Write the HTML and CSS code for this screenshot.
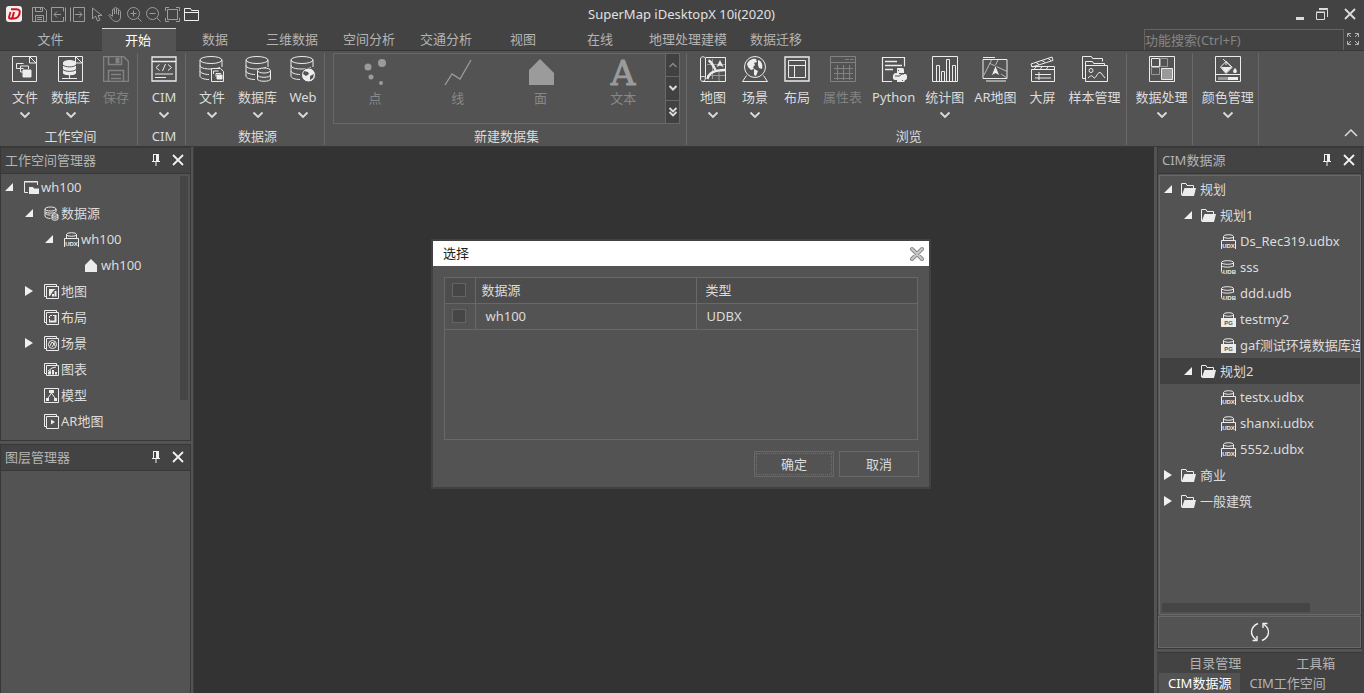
FILE: index.html
```html
<!DOCTYPE html>
<html lang="zh-CN">
<head>
<meta charset="utf-8">
<title>SuperMap iDesktopX 10i(2020)</title>
<link rel="stylesheet" href="styles.css">
</head>
<body>
<svg class="defs" aria-hidden="true">
  <symbol id="chev" viewBox="0 0 12 10"><path d="M1.500 2.500l4.500 4.500 4.500-4.500" stroke-width="1.800"/></symbol>
  <symbol id="close" viewBox="0 0 14 14"><path d="M2 2l10 10M12 2L2 12" stroke-width="1.800"/></symbol>
  <symbol id="pin" viewBox="0 0 10 14"><path d="M2 1.500h6M2.500 1v7M7.500 1v7M1 8.500h8M5 8v5"/><path d="M5 1h3v7H5z" fill="currentColor" stroke="none"/></symbol>
  <symbol id="open" viewBox="0 0 10 10"><path d="M9 1v8H1z" fill="currentColor" stroke="none"/></symbol>
  <symbol id="shut" viewBox="0 0 10 10"><path d="M1 0v10l8-5z" fill="currentColor" stroke="none"/></symbol>
  <symbol id="folder" viewBox="0 0 15 15"><path d="M.5 13V1.500h4.500l1 2h6.500V6"/><path d="M3.500 6H15l-2 8H.5z" fill="currentColor" stroke="none"/></symbol>
  <symbol id="cyl" viewBox="0 0 15 15"><ellipse cx="6.500" cy="3" rx="5.500" ry="2"/><path d="M1 3v7M12 3v3M1.500 6c2 1.500 8 1.500 10 0"/></symbol>
  <symbol id="udx" viewBox="0 0 15 15"><ellipse cx="7.500" cy="2.500" rx="5" ry="1.800"/><path d="M2.500 2.500V6M12.500 2.500V6M.5 15V6.500h14V15"/></symbol>
  <symbol id="udb" viewBox="0 0 15 15"><ellipse cx="6.500" cy="2.500" rx="6" ry="1.800"/><path d="M.5 2.500v9c0 1 .5 1.500 2 1.500M12.500 2.500v4M.5 6c2 1.500 9 1.500 12 0"/></symbol>
  <symbol id="pg" viewBox="0 0 15 15"><ellipse cx="7.500" cy="2.500" rx="5" ry="1.800"/><path d="M2.500 2.500V6M12.500 2.500V6"/><path d="M0 6h15v9H0z" fill="currentColor" stroke="none"/></symbol>
  <symbol id="stack" viewBox="0 0 15 15"><path d="M2.500 12.500h-2V.5h12v2M2.500 2.500h12v12h-12z"/></symbol>
  <symbol id="db" viewBox="0 0 26 26"><ellipse cx="12" cy="4" rx="11" ry="3.500"/><path d="M1 4v16c0 2 4 3.500 9 3.500M23 4v7M1 9.500c0 4 14 4.500 20 2M1 15c0 2 5 3.500 9 3.500"/></symbol>
  <symbol id="doc" viewBox="0 0 26 26"><path d="M.5.500h17l7 7v18H.5zM17.500.500v6.500h7M24.500.500v7M17.500.500h7"/></symbol>
</svg>

<header class="titlebar">
  <nav class="quick" aria-label="快速访问">
    <svg class="logo" viewBox="0 0 16 16"><rect width="16" height="16" rx="3" fill="#f4eeee" stroke="none"/><path d="M5 3.200h5.500c3 0 3.800 1.800 3 4.600C12.700 11 11 12.500 8 12.500H6.200L8 6" stroke="#d3121c" stroke-width="2"/><path d="M4.500 6L3 11c-.3 1.200.4 1.500 1.500 1.500h2" stroke="#d3121c" stroke-width="1.800"/></svg>
    <button aria-label="保存"><svg viewBox="0 0 15 15"><path d="M.5.500h11l3 3v11H.5zM3.500.500v4h7v-4M8.500 1v2M3.500 14V8.500h8V14M5 10.500h5M5 12.500h5"/></svg></button>
    <button aria-label="导入"><svg viewBox="0 0 15 15"><path d="M12.500.500H.5v14h12M14.500.500v14M12.500 .5v4M12.500 10v4.500M10 7.500H3M6 4.500l-3 3 3 3"/></svg></button>
    <button aria-label="导出"><svg viewBox="0 0 15 15"><path d="M.5.500v14M3.500.500v14M3.500.500h11v14h-11M5 7.500h7M9 4.500l3 3-3 3"/></svg></button>
    <button aria-label="选择"><svg viewBox="0 0 15 15"><path d="M3.500 1v11l3-3 2 5 2.500-1-2-4.500h4z"/></svg></button>
    <button aria-label="平移"><svg viewBox="0 0 15 15"><path d="M4.500 9V3c0-1.500 2-1.500 2 0v4V1.500c0-1.500 2-1.500 2 0V7 2.500c0-1.500 2-1.500 2 0V8 4.500c0-1.500 2-1.500 2 0V10c0 3-2 4.500-4 4.500-3 0-4-1.500-5-3L1 8.500c0-1 1-1.500 2-.5l1.500 1.500"/></svg></button>
    <button aria-label="放大"><svg viewBox="0 0 15 15"><circle cx="6.500" cy="6.500" r="6"/><path d="M11 11l3.500 3.500M3.500 6.500h6M6.500 3.500v6"/></svg></button>
    <button aria-label="缩小"><svg viewBox="0 0 15 15"><circle cx="6.500" cy="6.500" r="6"/><path d="M11 11l3.500 3.500M3.500 6.500h6"/></svg></button>
    <button aria-label="全幅"><svg viewBox="0 0 15 15"><path d="M2.500 2.500h10v10h-10zM.5 4V.5H4M11 .5h3.500V4M14.500 11v3.500H11M4 14.500H.5V11"/></svg></button>
    <button aria-label="打开" class="bright"><svg viewBox="0 0 15 15"><path d="M.5 13.500v-12h6l1 2h7v10zM.5 5.500h14"/></svg></button>
  </nav>
  <h1>SuperMap iDesktopX 10i(2020)</h1>
  <div class="winbtns">
    <button aria-label="最小化"><svg viewBox="0 0 14 14"><path d="M3 11.500h8" stroke-width="3"/></svg></button>
    <button aria-label="还原"><svg viewBox="0 0 14 14"><path d="M1.500 5.500h8v7h-8zM1 5h9" /><path d="M4 2.500h8.500V10M4 1.500h9"/></svg></button>
    <button aria-label="关闭"><svg><use href="#close"/></svg></button>
  </div>
</header>

<div class="tabs">
  <div class="tablist" role="tablist">
    <button role="tab" class="file">文件</button>
    <button role="tab" class="on" aria-selected="true">开始</button>
    <button role="tab">数据</button>
    <button role="tab">三维数据</button>
    <button role="tab">空间分析</button>
    <button role="tab">交通分析</button>
    <button role="tab">视图</button>
    <button role="tab">在线</button>
    <button role="tab">地理处理建模</button>
    <button role="tab">数据迁移</button>
  </div>
  <input class="search" type="text" placeholder="功能搜索(Ctrl+F)" aria-label="功能搜索">
  <button class="full" aria-label="全屏"><svg viewBox="0 0 14 14"><path d="M1.500 5V1.500H5M2 2l3 3M9 1.500h3.500V5M12 2L9 5M1.500 9v3.500H5M2 12l3-3M12.500 9v3.500H9M12 12L9 9"/></svg></button>
</div>

<section class="ribbon">
  <div class="group first">
    <div class="items">
      <button class="tool"><svg class="ic" viewBox="0 0 26 26"><use href="#doc"/><path d="M11.500 12.500H4.500v-5h7M14.500 16H8.500v-6h8v3"/><path d="M11 14h8v7h-8z" fill="currentColor"/></svg>文件<svg class="ch"><use href="#chev"/></svg></button>
      <button class="tool"><svg class="ic" viewBox="0 0 26 26"><use href="#doc"/><path d="M5 7c0-4 13-4 13 0v10c0 3-13 3-13 0z" fill="currentColor" stroke="none"/><path d="M5 9c2 2.500 11 2.500 13 0M5 13.500c2 2.500 11 2.500 13 0" stroke="#535353"/><path d="M11.500 19v3M4 22.500h15"/></svg>数据库<svg class="ch"><use href="#chev"/></svg></button>
      <button class="tool" disabled><svg class="ic" viewBox="0 0 26 26"><path d="M.5.500h20l5 5v20H.5zM5.500.500v8h13v-8" stroke-width="1.500"/><path d="M13 2h3v5h-3z" fill="currentColor"/><path d="M5.500 25V14.500h15V25M8 18.500h10M8 22.500h10" stroke-width="1.500"/></svg>保存</button>
    </div>
    <div class="cap">工作空间</div>
  </div>
  <div class="group">
    <div class="items">
      <button class="tool"><svg class="ic" viewBox="0 0 26 26"><path d="M1 1h24v24H1zM1 5.500h24" stroke-width="1.300"/><path d="M8.500 8.500L5 11.500l3.500 3M17 8.500l3.500 3-3.500 3M14.500 8l-3 7M4 18h18M4 21.500h11"/></svg>CIM<svg class="ch"><use href="#chev"/></svg></button>
    </div>
    <div class="cap">CIM</div>
  </div>
  <div class="group">
    <div class="items">
      <button class="tool"><svg class="ic" viewBox="0 0 26 26"><use href="#db"/><path d="M12.500 12.500h9l3 3v10h-12z" fill="#535353"/><path d="M14.500 18v-3h5M17 20.500v-3h5"/><path d="M18 19h5v4h-5z" fill="currentColor"/></svg>文件<svg class="ch"><use href="#chev"/></svg></button>
      <button class="tool"><svg class="ic" viewBox="0 0 26 26"><use href="#db"/><path d="M12.500 14.500v8.500c0 3 13 3 13 0v-8.500" fill="#535353"/><ellipse cx="19" cy="14.500" rx="6.500" ry="2.500" fill="#535353"/><path d="M12.500 19c0 3 13 3 13 0"/></svg>数据库<svg class="ch"><use href="#chev"/></svg></button>
      <button class="tool"><svg class="ic" viewBox="0 0 26 26"><use href="#db"/><circle cx="18.500" cy="19" r="7" fill="currentColor" stroke="#535353"/><path d="M14 15l4 1 1 2-3 2-3-2zM20 20l4-2-1 4-3 2z" fill="#535353" stroke="none"/></svg>Web<svg class="ch"><use href="#chev"/></svg></button>
    </div>
    <div class="cap">数据源</div>
  </div>
  <div class="group wide">
    <div class="gallery">
      <button disabled><svg viewBox="0 0 30 30"><g fill="currentColor" stroke="none"><circle cx="8" cy="11" r="3.500"/><circle cx="22" cy="7" r="4"/><circle cx="11" cy="21" r="2.500"/><circle cx="21" cy="27" r="2"/></g></svg>点</button>
      <button disabled><svg viewBox="0 0 30 30"><path d="M2 29l7-11 8 5L28 4" stroke-width="1.300"/></svg>线</button>
      <button disabled><svg viewBox="0 0 30 30"><path d="M3 29V14L14 3l14 14v12z" fill="currentColor" stroke="none"/></svg>面</button>
      <button disabled><svg viewBox="0 0 30 30"><text x="15" y="29" class="bigA">A</text></svg>文本</button>
      <div class="spin">
        <button disabled aria-label="上一行"><svg viewBox="0 0 12 10"><path d="M2.500 7L6 3.500 9.500 7" stroke-width="1.500"/></svg></button>
        <button aria-label="下一行"><svg viewBox="0 0 12 10"><path d="M2.500 3L6 6.500 9.500 3" stroke-width="2"/></svg></button>
        <button aria-label="展开"><svg viewBox="0 0 12 10"><path d="M2.500 1L6 4.500 9.500 1M2.500 5L6 8.500 9.500 5" stroke-width="1.800"/></svg></button>
      </div>
    </div>
    <div class="cap">新建数据集</div>
  </div>
  <div class="group">
    <div class="items">
      <button class="tool"><svg class="ic" viewBox="0 0 26 26"><path d="M5.500 1.500h20v24H3"/><path d="M5.500 3v18.500c0 5-5 5-5 1.500V3c0-3 5-3 5 0zM.5 22c0-2 5-2 5 0"/><path d="M12.500 3v20M19 16v9M7 8.500h18M7 19.500h18" stroke="#999"/><path d="M8.500 4.500c3 1 4 4 7 9.500M7.500 23c1-6 6-9 17.500-9" stroke-width="2.400"/><path d="M20 4l3.500 7-3.500-1.500-3.500 1.500z" fill="currentColor" stroke="none"/></svg>地图<svg class="ch"><use href="#chev"/></svg></button>
      <button class="tool"><svg class="ic" viewBox="0 0 26 26"><circle cx="13" cy="11" r="10.500"/><path d="M5 8c2-5 7-6 9-5l1 3-3 1 1 2-2 2 1 2-3 1-3-3zM16 4c4 1 5 5 4 9l-3-1-1-3zM12 13l4 2-2 5-2-1z" fill="currentColor" stroke="none"/><path d="M4.500 19.500L.5 25.500h25l-4-6"/></svg>场景<svg class="ch"><use href="#chev"/></svg></button>
      <button class="tool"><svg class="ic" viewBox="0 0 26 26"><path d="M1 1h24v24H1z" stroke-width="1.400"/><path d="M4.500 4.500h17v17h-17zM4.500 9.500h17M10.500 9.500v12"/></svg>布局</button>
      <button class="tool" disabled><svg class="ic" viewBox="0 0 26 26"><path d="M.5.500h25v25H.5zM.5 6.500h25M15 3.500h4M20 3.500h4M4 12.500h19M4 17.500h19M4 22.500h19M7.500 9v15M13.500 9v15M19.500 9v15"/></svg>属性表</button>
      <button class="tool"><svg class="ic" viewBox="0 0 26 26"><path d="M11 25.500H1.500V1.500h22v9" stroke-width="1.200"/><path d="M4 5.500h12M4 9.500h17M4 13.500h8" stroke-width="1.500"/><path d="M16 12h5c2 0 2 1 2 3v2h-5v1h6c3 0 3 6 0 6l-1 3h-5c-2 0-2-1-2-3h-2c-3 0-3-7 1-7h1z" fill="currentColor" stroke="none"/><path d="M14 20h4c1 0 2-.5 2-2h3M17 14.500h1M21 24.500h1" stroke="#535353"/></svg>Python</button>
      <button class="tool"><svg class="ic" viewBox="0 0 26 26"><path d="M.5.500h25v25H.5z"/><path d="M4.500 25V9.500h3V25M9.500 25v-9.500h3V25M14.500 25V3.500h3V25M20.500 25V9.500h3V25"/></svg>统计图<svg class="ch"><use href="#chev"/></svg></button>
      <button class="tool"><svg class="ic" viewBox="0 0 26 26"><path d="M1 3.500h24v19H1zM1 1.500h12M4 25h20"/><path d="M9.500 4L2 19M8 7.500l17 8M16 4l-3 6M19 18l6 4" stroke="#bbb"/><path d="M13.500 9l4.500 11-4.500-2.500L9 20z" fill="currentColor" stroke="#535353"/></svg>AR地图</button>
      <button class="tool"><svg class="ic" viewBox="0 0 26 26"><path d="M1.500 13.500h23v12h-23zM1.500 10.500h23v3h-23M1 8L22 1l1 3.500L2 11zM6 6.500l3 2M12 4.500l3 2M18 2.500l3 2M6 11l-2 2.500M12 11l-2 2.500M18 11l-2 2.500M5 18.500h16M5 22h16M9 16v8"/></svg>大屏</button>
      <button class="tool"><svg class="ic" viewBox="0 0 26 26"><path d="M3 22.500H.5v-22h9l1 2h10v3M3.500 25V5.500h7l1 2h11v2M3.500 9.500h22v16h-22z"/><circle cx="9" cy="14.500" r="2"/><path d="M6 22c3-3 4-3 6 0 2 1 4-8 7-5l4 5"/></svg>样本管理</button>
    </div>
    <div class="cap">浏览</div>
  </div>
  <div class="group slim">
    <div class="items">
      <button class="tool"><svg class="ic" viewBox="0 0 26 26"><path d="M.5.500h25v25H.5z"/><path d="M11.500 2.500h7v8h-7zM2.500 11.500h8v7h-8z" stroke="#999"/><path d="M2.500 2.500h8v8h-8z"/><path d="M12.500 12.500h11v11h-11z" fill="#9a9a9a"/></svg>数据处理<svg class="ch"><use href="#chev"/></svg></button>
    </div>
  </div>
  <div class="group slim">
    <div class="items">
      <button class="tool"><svg class="ic" viewBox="0 0 26 26"><path d="M.5.500h25v25H.5zM.5 18.500h25"/><path d="M8 3l9 8M11 5v4"/><path d="M5.500 11L11 5.500l6 6-6 6z"/><path d="M6 11h11l-6 6zM20 12c3 3 2 5 0 5s-3-2 0-5z" fill="currentColor" stroke="none"/><path d="M3 22.500h10" stroke="#999" stroke-width="3"/><path d="M13 22.500h10" stroke-width="3"/></svg>颜色管理<svg class="ch"><use href="#chev"/></svg></button>
    </div>
  </div>
  <button class="collapse" aria-label="折叠功能区"><svg viewBox="0 0 14 10"><path d="M1 8l6-6 6 6" stroke-width="1.500"/></svg></button>
</section>

<main class="work">
  <aside class="left">
    <section class="panel upper">
      <header class="phead"><h2>工作空间管理器</h2><button aria-label="固定"><svg class="pin"><use href="#pin"/></svg></button><button aria-label="关闭"><svg class="x"><use href="#close"/></svg></button></header>
      <div class="pbody">
        <ul class="tree">
          <li class="l0"><svg class="ar"><use href="#open"/></svg><svg class="ti" viewBox="0 0 15 15"><path d="M4 12.500H.5V1.500h13V5M.5 2h13"/><path d="M5 7h4l1 1.500h5V14H5z" fill="currentColor" stroke="none"/></svg>wh100</li>
          <li class="l1"><svg class="ar"><use href="#open"/></svg><svg class="ti" viewBox="0 0 15 15"><use href="#cyl"/><path d="M1 10c0 1.500 3 2.500 5.500 2.500M1.500 7c1 2 3 2 5 2"/><ellipse cx="11" cy="9" rx="3" ry="1.200"/><path d="M8 9v4c0 1.500 6 1.500 6 0V9M8 11c1 1.500 5 1.500 6 0"/></svg>数据源</li>
          <li class="l2"><svg class="ar"><use href="#open"/></svg><svg class="ti" viewBox="0 0 15 15"><use href="#udx"/><text x="7.500" y="14" class="tiny">UDX</text></svg>wh100</li>
          <li class="l3"><span class="ar"></span><svg class="ti" viewBox="0 0 15 15"><path d="M1 14V7l6-6 6 6v7z" fill="currentColor" stroke="none"/></svg>wh100</li>
          <li class="l1"><svg class="ar"><use href="#shut"/></svg><svg class="ti" viewBox="0 0 15 15"><use href="#stack"/><path d="M5 5h7c-3 1-4 4-6 7H5z" fill="currentColor" stroke="none"/><path d="M11.500 7v5.500M9 10v2.500" stroke-width="2"/></svg>地图</li>
          <li class="l1"><span class="ar"></span><svg class="ti" viewBox="0 0 15 15"><use href="#stack"/><path d="M5.500 11V5.500H11" stroke-dasharray="2 1"/><path d="M5 11.500h6.500V5" stroke-width="2"/></svg>布局</li>
          <li class="l1"><svg class="ar"><use href="#shut"/></svg><svg class="ti" viewBox="0 0 15 15"><use href="#stack"/><circle cx="8.500" cy="8.500" r="4"/><path d="M6 10l2-4 2 2-2 3M10 6l1 4"/></svg>场景</li>
          <li class="l1"><span class="ar"></span><svg class="ti" viewBox="0 0 15 15"><path d="M2.500 11.500h-2v-10h12v2M2.500 3.500h12v10h-12z"/><path d="M4 12.500V10l3-2v4.500zM8 12.500V8h2v4.500zM11 12.500V10h2v2.500z" fill="currentColor" stroke="none"/><path d="M4 9l4-3 4-1"/></svg>图表</li>
          <li class="l1"><span class="ar"></span><svg class="ti" viewBox="0 0 15 15"><path d="M.5.500h14v14H.5z"/><path d="M5 2h5v3H5zM2 10h3v3H2zM10 10h3v3h-3z" fill="currentColor" stroke="none"/><path d="M4 10l3.500-5L11 10"/></svg>模型</li>
          <li class="l1"><span class="ar"></span><svg class="ti" viewBox="0 0 15 15"><use href="#stack"/><path d="M7 5.500v5l4-2.500z" fill="currentColor" stroke="none"/></svg>AR地图</li>
        </ul>
        <div class="vbar"></div>
      </div>
    </section>
    <section class="panel lower">
      <header class="phead"><h2>图层管理器</h2><button aria-label="固定"><svg class="pin"><use href="#pin"/></svg></button><button aria-label="关闭"><svg class="x"><use href="#close"/></svg></button></header>
    </section>
  </aside>

  <div class="canvas"></div>

  <aside class="right">
    <section class="panel cim">
      <header class="phead"><h2>CIM数据源</h2><button aria-label="固定"><svg class="pin"><use href="#pin"/></svg></button><button aria-label="关闭"><svg class="x"><use href="#close"/></svg></button></header>
      <div class="box">
        <ul class="tree wider">
          <li class="l0"><svg class="ar"><use href="#open"/></svg><svg class="ti"><use href="#folder"/></svg>规划</li>
          <li class="l1"><svg class="ar"><use href="#open"/></svg><svg class="ti"><use href="#folder"/></svg>规划1</li>
          <li class="l2"><span class="ar"></span><svg class="ti" viewBox="0 0 15 15"><use href="#udx"/><text x="7.500" y="14" class="tiny">UDX</text></svg>Ds_Rec319.udbx</li>
          <li class="l2"><span class="ar"></span><svg class="ti" viewBox="0 0 15 15"><use href="#udb"/><text x="8.500" y="14" class="tiny">UDB</text></svg>sss</li>
          <li class="l2"><span class="ar"></span><svg class="ti" viewBox="0 0 15 15"><use href="#udb"/><text x="8.500" y="14" class="tiny">UDB</text></svg>ddd.udb</li>
          <li class="l2"><span class="ar"></span><svg class="ti" viewBox="0 0 15 15"><use href="#pg"/><text x="7.500" y="13" class="tiny inv">PG</text></svg>testmy2</li>
          <li class="l2"><span class="ar"></span><svg class="ti" viewBox="0 0 15 15"><use href="#pg"/><text x="7.500" y="13" class="tiny inv">PG</text></svg>gaf测试环境数据库连接</li>
          <li class="l1 sel"><svg class="ar"><use href="#open"/></svg><svg class="ti"><use href="#folder"/></svg>规划2</li>
          <li class="l2"><span class="ar"></span><svg class="ti" viewBox="0 0 15 15"><use href="#udx"/><text x="7.500" y="14" class="tiny">UDX</text></svg>testx.udbx</li>
          <li class="l2"><span class="ar"></span><svg class="ti" viewBox="0 0 15 15"><use href="#udx"/><text x="7.500" y="14" class="tiny">UDX</text></svg>shanxi.udbx</li>
          <li class="l2"><span class="ar"></span><svg class="ti" viewBox="0 0 15 15"><use href="#udx"/><text x="7.500" y="14" class="tiny">UDX</text></svg>5552.udbx</li>
          <li class="l0"><svg class="ar"><use href="#shut"/></svg><svg class="ti"><use href="#folder"/></svg>商业</li>
          <li class="l0"><svg class="ar"><use href="#shut"/></svg><svg class="ti"><use href="#folder"/></svg>一般建筑</li>
        </ul>
        <div class="hbar"></div>
      </div>
      <button class="refresh" aria-label="刷新"><svg viewBox="0 0 20 20"><path d="M8 1.500C0 5-.5 13 6 17.500M2.500 18.500h4.500V14M12 18.500c8-3.500 8.500-11.500 2-16M17.500 1.500H13V6" stroke-width="1.400"/></svg></button>
    </section>
    <div class="dock">
      <div class="row one"><button>目录管理</button><button>工具箱</button></div>
      <div class="row two"><button class="on">CIM数据源</button><button>CIM工作空间</button></div>
    </div>
  </aside>
</main>

<div class="dialog" role="dialog" aria-labelledby="dlg">
  <header><h2 id="dlg">选择</h2><button aria-label="关闭"><svg viewBox="0 0 16 16"><path d="M3 3l10 10M13 3L3 13" stroke="#8a8a8a" stroke-width="4" stroke-linecap="round"/><path d="M3 3l10 10M13 3L3 13" stroke="#c8c8c8" stroke-width="2" stroke-linecap="round"/></svg></button></header>
  <div class="dbody">
    <div class="grid">
      <table>
        <thead><tr><th class="ck"><input type="checkbox" aria-label="全选"></th><th class="c2">数据源</th><th>类型</th></tr></thead>
        <tbody><tr><td class="ck"><input type="checkbox" aria-label="选择 wh100"></td><td>wh100</td><td>UDBX</td></tr></tbody>
      </table>
    </div>
    <div class="acts"><button class="focus">确定</button><button>取消</button></div>
  </div>
</div>
</body>
</html>
```
FILE: styles.css
```css
* { box-sizing: border-box; }
body {
  margin: 0;
  height: 100vh;
  display: flex;
  flex-direction: column;
  overflow: hidden;
  background: #434343;
  color: #dcdcdc;
  font: 13px/20px "Noto Sans", "Noto Sans CJK SC", sans-serif;
}
button {
  font: inherit;
  color: inherit;
  background: none;
  border: 0;
  padding: 0;
  white-space: nowrap;
}
h1, h2 { margin: 0; font: inherit; }
ul { margin: 0; padding: 0; list-style: none; }
svg { display: block; fill: none; stroke: currentColor; flex: none; }
.defs { position: absolute; width: 0; height: 0; }
.tiny { font: bold 6px/6px "Liberation Sans", sans-serif; fill: currentColor; stroke: none; text-anchor: middle; }
.inv { fill: #535353; }

.titlebar { display: flex; align-items: center; height: 28px; padding: 0 7px 0 6px; }
.logo { width: 16px; height: 16px; margin-right: 6px; }
.quick { display: flex; gap: 4px; flex: 1; color: #9c9c9c; }
.quick button svg { width: 15px; height: 15px; }
.quick .bright { color: #f0f0f0; }
.titlebar h1 { color: #e0e0e0; }
.winbtns { flex: 1; display: flex; justify-content: flex-end; gap: 8px; }
.winbtns button:last-child { margin-left: 6px; }
.winbtns svg { width: 14px; height: 14px; }

.tabs { display: flex; height: 23px; border-bottom: 1px solid #383838; color: #b4b4b4; }
.tablist { display: flex; gap: 3px; flex: 1; }
.tablist button { min-width: 74px; padding: 0 10px 0 8px; }
.tablist .file { min-width: 99px; padding: 0 8px 0 10px; }
.tablist .on { background: #535353; border-top: 1px solid #d8d8d8; color: #fff; margin-bottom: -1px; }
.search {
  width: 200px;
  margin-top: 1px;
  border: 1px solid #646464;
  border-bottom: 0;
  background: transparent;
  color: #ddd;
  font: inherit;
  padding: 0;
}
.search::placeholder { color: #858585; opacity: 1; }
.full { padding: 0 4px 0 2px; }
.full svg { width: 14px; height: 14px; }

.ribbon { display: flex; height: 96px; background: #535353; border-bottom: 1px solid #383838; flex: none; }
.group {
  display: flex;
  flex-direction: column;
  padding: 0 5px 0 10px;
  border-right: 1px solid #686868;
  margin: 2px 0 1px;
}
.first { padding-left: 9px; }
.wide { padding: 0 6px 0 8px; }
.slim { padding: 0 4px 0 9px; }
.items { display: flex; gap: 10px; height: 74px; }
.tool { display: flex; flex-direction: column; align-items: center; min-width: 32px; padding-top: 3px; }
.tool .ic { width: 26px; height: 26px; margin-bottom: 5px; color: #ececec; }
.tool .ch { width: 12px; height: 10px; margin-top: 3px; color: #dcdcdc; }
.tool:disabled, .tool:disabled .ic { color: #828282; }
.cap { text-align: center; line-height: 18px; }
.gallery { display: grid; grid-template-columns: repeat(4, 82px) 14px; width: 347px; justify-content: space-between; height: 71px; border: 1px solid #686868; margin-bottom: 3px; flex: none; }
.gallery > button { display: flex; flex-direction: column; align-items: center; padding-top: 2px; color: #888; }
.gallery > button svg { width: 30px; height: 30px; margin-bottom: 2px; color: #9b9b9b; }
.bigA { font: 34px/34px "DejaVu Serif", serif; fill: currentColor; stroke: currentColor; text-anchor: middle; }
.spin { display: grid; grid-template-rows: 1fr 1fr 1fr; gap: 1px; background: #686868; border-left: 1px solid #686868; }
.spin button { background: #414141; display: flex; align-items: center; justify-content: center; }
.spin svg { width: 12px; height: 10px; }
.spin button:disabled { color: #888; }
.collapse { margin-left: auto; padding: 0 6px 8px; display: flex; align-items: flex-end; }
.collapse svg { width: 14px; height: 10px; }

.work { display: flex; flex: 1; min-height: 0; background: #535353; }
.left { width: 194px; flex: none; display: flex; flex-direction: column; padding-right: 2px; border-right: 1px solid #3d3d3d; gap: 3px; }
.panel { border: 1px solid #383838; }
.phead { display: flex; align-items: center; height: 26px; background: #434343; border-bottom: 1px solid #383838; padding: 0 5px 2px 4px; color: #b4b4b4; }
.phead h2 { flex: 1; }
.phead button { color: #f0f0f0; margin-left: 10px; }
.phead .pin { width: 10px; height: 14px; }
.phead .x { width: 14px; height: 14px; }
.pbody { display: flex; padding: 0 2px 6px 0; }
.tree { flex: 1; min-width: 0; overflow: hidden; }
.tree li { display: flex; align-items: center; height: 26px; white-space: nowrap; }
.ar { width: 10px; height: 10px; margin: 0 10px 0 3px; color: #f0f0f0; flex: none; }
.ti { width: 15px; height: 15px; margin-right: 2px; color: #ececec; }
.wider .ar { margin-right: 8px; }
.wider .ti { margin-right: 4px; }
.l1 { padding-left: 20px; }
.l2 { padding-left: 40px; }
.l3 { padding-left: 60px; }
.vbar { width: 8px; height: 224px; margin-top: 2px; background: #454545; }
.lower { flex: 1; border-bottom: 0; }
.canvas { flex: 1; background: #333; }
.right { width: 210px; flex: none; display: flex; flex-direction: column; padding-left: 3px; border-right: 2px solid #434343; }
.cim { flex: 1; display: flex; flex-direction: column; min-height: 0; }
.box { flex: 1; display: flex; flex-direction: column; border: 1px solid #686868; margin: 1px 0 1px 1px; min-height: 0; }
.sel { background: #414141; }
.hbar { width: 148px; height: 9px; margin: 0 2px 2px; background: #454545; }
.refresh { height: 32px; border: 1px solid #686868; display: flex; align-items: center; justify-content: center; }
.refresh svg { width: 20px; height: 20px; color: #f0f0f0; }
.dock { background: #434343; border-top: 1px solid #383838; margin-top: 3px; color: #b4b4b4; }
.row { display: flex; height: 20px; }
.row button { line-height: 20px; }
.one button { flex: 1; text-align: center; padding: 0 0 2px 8px; }
.one button:first-child { padding-left: 12px; }
.two { padding-left: 2px; }
.two button { padding: 0 9px; }
.two .on { background: #535353; color: #fff; }

.dialog { position: absolute; left: 50%; top: 239px; width: 500px; margin-left: -251px; border: 2px solid #414141; background: #535353; }
.dialog header { display: flex; align-items: center; justify-content: space-between; height: 25px; background: #fff; color: #222; padding: 0 4px 0 10px; }
.dialog header svg { width: 16px; height: 16px; }
.dialog h2 { padding-bottom: 2px; }
.dbody { padding: 11px 10px 10px 11px; }
.grid { height: 163px; border: 1px solid #686868; margin-right: 1px; }
table { width: 100%; border-collapse: collapse; table-layout: fixed; }
th, td { height: 26px; padding: 0 0 0 10px; text-align: left; font-weight: normal; border: 1px solid #686868; }
tr > :first-child { border-left: 0; }
tr > :last-child { border-right: 0; }
thead th { height: 25px; background: #4d4d4d; border-top: 0; }
th { padding-left: 9px; }
.c2 { width: 221px; padding-left: 6px; }
.ck { width: 30px; padding: 0 0 0 7px; }
.ck input { appearance: none; display: block; width: 14px; height: 14px; margin: 0; border: 1px solid #646464; background: #464646; }
.acts { display: flex; justify-content: flex-end; gap: 5px; margin-top: 11px; }
.acts button { width: 80px; height: 26px; border: 1px solid #686868; }
.acts .focus { outline: 1px dotted #707070; outline-offset: -3px; }
```
